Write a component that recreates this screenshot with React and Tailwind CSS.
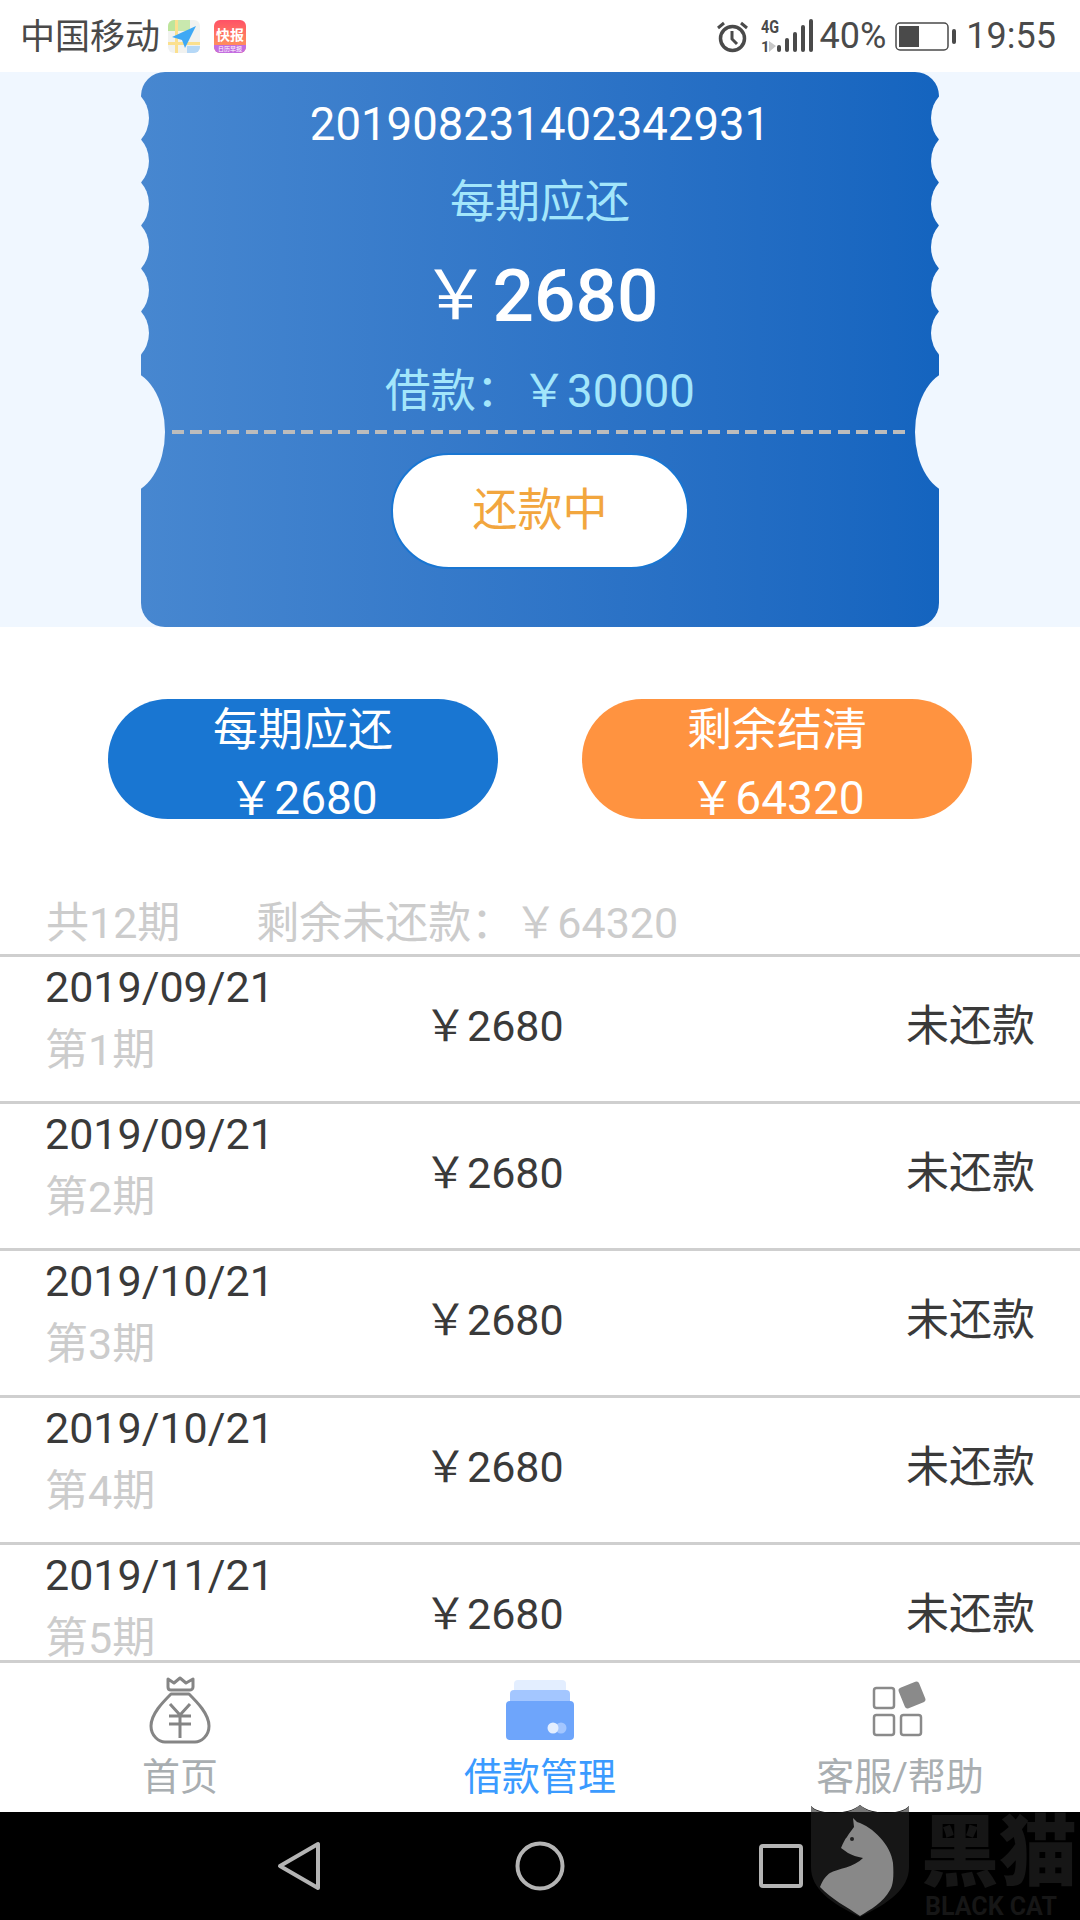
const rows = [
	{ date: '2019/09/21', term: '第1期' },
	{ date: '2019/09/21', term: '第2期' },
	{ date: '2019/10/21', term: '第3期' },
	{ date: '2019/10/21', term: '第4期' },
	{ date: '2019/11/21', term: '第5期' },
];

const bumps = [0, 1, 2, 3, 4, 5];

function MapIcon() {
	return (
		<svg width="32" height="33" viewBox="0 0 32 33">
			<rect width="32" height="33" rx="6" fill="#f1f2f0" />
			<path d="M0 6a6 6 0 0 1 6-6h1v11H0z" fill="#bde59b" />
			<path d="M10 0h12v11H10z" fill="#c9e8ae" />
			<path d="M19 26h13v1a6 6 0 0 1-6 6h-7z" fill="#b5d8f7" />
			<rect x="7" y="0" width="3" height="33" fill="#fbe08f" />
			<rect x="0" y="22" width="32" height="3" fill="#fbe08f" />
			<path d="M28 6 L4 17 L14 20 L17 28z" fill="#3fa9f5" />
		</svg>
	);
}

function SaleIcon() {
	return (
		<svg width="32" height="33" viewBox="0 0 32 33">
			<defs>
				<linearGradient id="sale" x1="0" y1="0" x2="0" y2="1">
					<stop offset="0" stopColor="#ff5166" />
					<stop offset="0.7" stopColor="#ff8a5e" />
				</linearGradient>
			</defs>
			<rect width="32" height="33" rx="6" fill="url(#sale)" />
			<path d="M0 25h32v2a6 6 0 0 1-6 6H6a6 6 0 0 1-6-6z" fill="#c46de0" />
			<text x="16" y="20" textAnchor="middle" fontSize="14" fontWeight="700" fill="#fff" fontFamily="'Noto Sans CJK SC', sans-serif">快报</text>
			<text x="16" y="31" textAnchor="middle" fontSize="6" fill="#fff" fontFamily="'Noto Sans CJK SC', sans-serif">日历早报</text>
		</svg>
	);
}

function AlarmIcon() {
	return (
		<svg width="33" height="33" viewBox="0 0 33 33" fill="none" stroke="#4a4a4a">
			<circle cx="16.5" cy="18.5" r="12" strokeWidth="3.5" />
			<path d="M16 11v8l5 5" strokeWidth="3" />
			<path d="M2 8l6-5M31 8l-6-5" strokeWidth="3" />
		</svg>
	);
}

function SignalIcon() {
	return (
		<svg width="54" height="34" viewBox="0 0 54 34">
			<text x="0" y="14" fontSize="18" fontWeight="700" fill="#4a4a4a" fontFamily="Roboto, sans-serif" textLength="18" lengthAdjust="spacingAndGlyphs">4G</text>
			<text x="0" y="33" fontSize="15" fontWeight="700" fill="#4a4a4a" fontFamily="Roboto, sans-serif">1</text>
			<path d="M8 22v11l7-6z" fill="#c8c8c8" />
			<rect x="16" y="26" width="4" height="7" rx="2" fill="#4a4a4a" />
			<rect x="24" y="19" width="4" height="14" rx="2" fill="#4a4a4a" />
			<rect x="32" y="13" width="4" height="20" rx="2" fill="#4a4a4a" />
			<rect x="40" y="6" width="4" height="27" rx="2" fill="#4a4a4a" />
			<rect x="48" y="0" width="4" height="33" rx="2" fill="#4a4a4a" />
		</svg>
	);
}

function BatteryIcon() {
	return (
		<svg width="62" height="29" viewBox="0 0 62 29">
			<rect x="1" y="1" width="52" height="27" rx="4" fill="none" stroke="#4a4a4a" strokeWidth="1.5" />
			<rect x="4" y="4" width="20" height="21" fill="#4a4a4a" />
			<rect x="57" y="7" width="4" height="15" rx="2" fill="#4a4a4a" />
		</svg>
	);
}

function BagIcon() {
	return (
		<svg width="62" height="68" viewBox="0 0 62 68" fill="none" stroke="#858585" strokeWidth="3" strokeLinejoin="round">
			<path d="M19 3L25 7L31 2L37 7L44 3V11C44 13 42 14 41 14H22C20 14 19 13 19 11z" />
			<path d="M22 18H40C48 26 60 38 60 50C60 60 52 66 46 66H16C10 66 2 60 2 50C2 38 14 26 22 18z" />
			<path d="M21 28L31 39L41 28M20 40H42M20 48H42M31 39V62" />
		</svg>
	);
}

function CardIcon() {
	return (
		<svg width="68" height="60" viewBox="0 0 68 60">
			<path d="M8 4a4 4 0 0 1 4-4h44a4 4 0 0 1 4 4v12H8z" fill="#e3eeff" />
			<path d="M4 14a4 4 0 0 1 4-4h52a4 4 0 0 1 4 4v10H4z" fill="#a3c6ff" />
			<path d="M0 25a4 4 0 0 1 4-4h60a4 4 0 0 1 4 4v31a4 4 0 0 1-4 4H4a4 4 0 0 1-4-4z" fill="#6ea5fb" />
			<circle cx="55" cy="48" r="5.5" fill="#a3c6ff" />
			<circle cx="47" cy="48" r="5.5" fill="#e3eeff" />
		</svg>
	);
}

function GridIcon() {
	return (
		<svg width="56" height="58" viewBox="0 0 56 58">
			<g fill="none" stroke="#8a8a8a" strokeWidth="2.5">
				<rect x="2" y="8" width="20" height="20" rx="2.5" />
				<rect x="2" y="35" width="20" height="20" rx="2.5" />
				<rect x="29" y="35" width="20" height="20" rx="2.5" />
			</g>
			<rect x="29" y="4" width="22" height="22" rx="3" fill="#8a8a8a" transform="rotate(-22 40 15)" />
		</svg>
	);
}

function Watermark() {
	return (
		<div className="absolute left-[811px] top-[1805px] h-[115px] w-[269px]">
			<svg width="98" height="113" viewBox="0 0 98 113" className="absolute left-0 top-0">
				<path d="M0 1C8 10 38 10 49 0C60 10 90 10 98 1V62C98 84 78 98 49 112C20 98 0 84 0 62z" fill="#161616" />
				<path d="M0 1C3 5 8 7 13 7H0zM49 0C44 4 40 6 36 7H62C58 6 54 4 49 0zM98 1C95 5 90 7 85 7H98z" fill="#777" />
				<path d="M42 13L46 17C62 22 80 40 82 58C83 72 82 80 79 85C72 98 60 104 49 111C36 102 20 94 9 82C12 74 16 70 19 68C26 64 44 62 52 53C46 52 41 50 37 48L30 43C32 38 34 34 36 32C38 28 41 25 43 22z" fill="#888" />
				<circle cx="41" cy="34" r="2" fill="#222" />
			</svg>
			<div className="absolute left-[110px] top-[6px] whitespace-nowrap text-[78px] leading-[86px] font-black text-[#161616]">黑猫</div>
			<div className="absolute left-[114px] top-[90px] whitespace-nowrap text-[25px] leading-[24px] font-bold text-[#161616]">BLACK CAT</div>
		</div>
	);
}

export default function App() {
	return (
		<div className="relative flex h-[1920px] w-[1080px] flex-col overflow-hidden bg-white font-[Roboto,'Noto_Sans_CJK_SC',sans-serif]">
			<div className="flex h-[72px] shrink-0 items-center justify-between pl-[20px] pr-[24px] text-[#4a4a4a]">
				<div className="flex items-center">
					<span className="mt-[3px] text-[35px] leading-[72px]">中国移动</span>
					<span className="ml-[8px] flex gap-[14px]">
						<MapIcon />
						<SaleIcon />
					</span>
				</div>
				<div className="flex items-center">
					<AlarmIcon />
					<span className="ml-[12px] flex"><SignalIcon /></span>
					<span className="ml-[5px] text-[36px] leading-[72px]">40%</span>
					<span className="ml-[9px] flex"><BatteryIcon /></span>
					<span className="ml-[9px] text-[36px] leading-[72px]">19:55</span>
				</div>
			</div>

			<div className="flex h-[555px] shrink-0 justify-center bg-[#f0f7ff]">
				<div className="relative flex h-[555px] w-[798px] flex-col items-center overflow-hidden rounded-[24px] bg-linear-to-r from-[#4787d0] to-[#1464bf] pt-[20px]">
					<div className="absolute -left-[58px] top-[13px] flex flex-col">
						{bumps.map((b) => (
							<div key={b} className="-mb-[23px] h-[66px] w-[66px] rounded-full bg-[#f0f7ff]" />
						))}
					</div>
					<div className="absolute -right-[58px] top-[13px] flex flex-col">
						{bumps.map((b) => (
							<div key={b} className="-mb-[23px] h-[66px] w-[66px] rounded-full bg-[#f0f7ff]" />
						))}
					</div>
					<div className="absolute -left-[56px] top-[298px] h-[124px] w-[80px] rounded-[50%] bg-[#f0f7ff]" />
					<div className="absolute -right-[56px] top-[298px] h-[124px] w-[80px] rounded-[50%] bg-[#f0f7ff]" />

					<div className="h-[66px] text-[45.5px] leading-[66px] text-white">201908231402342931</div>
					<div className="mt-[15px] h-[60px] text-[45px] leading-[60px] text-[#a3e6fb]">每期应还</div>
					<div className="mt-[23px] flex h-[80px] items-center text-white">
						<span className="text-[68px] leading-[80px]">￥</span>
						<span className="ml-[3px] text-[73px] leading-[80px] font-medium">2680</span>
					</div>
					<div className="mt-[26px] h-[60px] text-[45.5px] leading-[60px] text-[#a3e6fb]">借款：￥30000</div>
					<div className="mt-[8px] h-[4px] w-[736px] bg-[repeating-linear-gradient(90deg,#bcbcbc_0,#bcbcbc_12px,transparent_12px,transparent_18.5px)]" />
					<div className="mt-[19px] flex h-[116px] w-[298px] items-center justify-center rounded-full border-2 border-[#1976d2] bg-white text-[45px] text-[#f2a63e]">还款中</div>
				</div>
			</div>

			<div className="mt-[72px] flex shrink-0 justify-center gap-[84px]">
				<div className="flex h-[120px] w-[390px] flex-col items-center rounded-full bg-[#1976d2] text-white">
					<div className="mt-[1px] h-[62px] text-[45px] leading-[62px]">每期应还</div>
					<div className="mt-[9px] h-[54px] text-[46px] leading-[54px]">￥2680</div>
				</div>
				<div className="flex h-[120px] w-[390px] flex-col items-center rounded-full bg-[#ff9340] text-white">
					<div className="mt-[1px] h-[62px] text-[45px] leading-[62px]">剩余结清</div>
					<div className="mt-[9px] h-[54px] text-[46px] leading-[54px]">￥64320</div>
				</div>
			</div>

			<div className="mt-[73px] flex h-[62px] shrink-0 items-center gap-[76px] pl-[46px] text-[43px] text-[#cccccc]">
				<span>共12期</span>
				<span>剩余未还款：￥64320</span>
			</div>

			<div className="min-h-0 flex-1 overflow-hidden border-t-[3px] border-[#cfcfcf]">
				{rows.map((row) => (
					<div key={row.term} className="grid h-[147px] grid-cols-[379px_1fr_auto] items-center border-b-[3px] border-[#cfcfcf] pb-[6px] pl-[45px] pr-[45px]">
						<div className="-mt-[16px]">
							<div className="text-[43px] leading-[60px] text-[#3a3a3a]">{row.date}</div>
							<div className="mt-[3px] text-[43px] leading-[60px] text-[#cccccc]">{row.term}</div>
						</div>
						<div className="text-[43px] text-[#3a3a3a]">￥2680</div>
						<div className="text-[43px] text-[#3a3a3a]">未还款</div>
					</div>
				))}
			</div>

			<div className="grid h-[152px] shrink-0 grid-cols-3 border-t-[3px] border-[#cfcfcf]">
				<div className="flex flex-col items-center">
					<div className="mt-[13px] h-[69px]"><BagIcon /></div>
					<div className="mt-[7px] text-[38px] leading-[50px] text-[#a9aeb1]">首页</div>
				</div>
				<div className="flex flex-col items-center">
					<div className="mt-[13px] h-[69px] pt-[4px]"><CardIcon /></div>
					<div className="mt-[7px] text-[38px] leading-[50px] text-[#3b9bff]">借款管理</div>
				</div>
				<div className="flex flex-col items-center">
					<div className="mt-[13px] h-[69px] pt-[4px]"><GridIcon /></div>
					<div className="mt-[7px] text-[38px] leading-[50px] text-[#a9aeb1]">客服/帮助</div>
				</div>
			</div>

			<div className="flex h-[108px] shrink-0 items-center justify-center gap-[194px] bg-black">
				<svg width="44" height="50" viewBox="0 0 44 50" fill="none" stroke="#b4b4b4" strokeWidth="4" strokeLinejoin="round">
					<path d="M41 3V47L3 25z" />
				</svg>
				<svg width="50" height="50" viewBox="0 0 50 50" fill="none" stroke="#b4b4b4" strokeWidth="4">
					<circle cx="25" cy="25" r="22.5" />
				</svg>
				<svg width="44" height="44" viewBox="0 0 44 44" fill="none" stroke="#b4b4b4" strokeWidth="4" strokeLinejoin="round">
					<rect x="2" y="2" width="40" height="40" rx="2" />
				</svg>
			</div>

			<Watermark />
		</div>
	);
}
